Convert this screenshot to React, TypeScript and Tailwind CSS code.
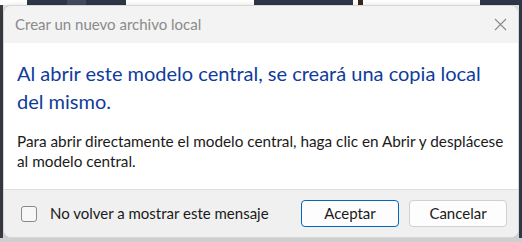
export default function App() {
  const font = { fontFamily: 'Lato, "Noto Sans", sans-serif' };

  return (
    <div className="w-[522px] h-[242px] flex flex-col bg-[#e6e6e6] overflow-hidden" style={font}>
      {/* background strip behind the dialog */}
      <div className="h-[5px] flex shrink-0">
        <div className="w-[27px] bg-white" />
        <div className="w-[40px] bg-[#2e3748]" />
        <div className="w-[19px] bg-[#414b5c]" />
        <div className="w-[40px] bg-[#2e3748]" />
        <div className="w-[128px] bg-white" />
        <div className="w-[99px] bg-[#2e3748]" />
        <div className="w-[5px] bg-white" />
        <div className="w-[5px] bg-[#3b2a1a]" />
        <div className="w-[117px] bg-white" />
        <div className="flex-1 bg-[#2e3748]" />
      </div>

      <div className="flex flex-1 min-h-0">
        <div className="w-[3px] bg-[#3a3d42]" />

        <div className="w-[516px] flex flex-col rounded-lg overflow-hidden border border-[#d6d6d6] shadow-[0_2px_6px_rgba(0,0,0,0.25)]">
          {/* title bar */}
          <div className="h-[37px] shrink-0 flex items-center justify-between bg-[#f3f3f3] pl-[11px] pr-[11px]">
            <span className="text-[15px] text-[#8a8a8a] whitespace-nowrap">Crear un nuevo archivo local</span>
            <svg width="13" height="13" viewBox="0 0 13 13" className="text-[#8a8a8a]">
              <path d="M1 1 L12 12 M12 1 L1 12" stroke="currentColor" strokeWidth="1.1" fill="none" />
            </svg>
          </div>

          {/* content */}
          <div className="flex-1 bg-white pl-[13px] pr-[10px] pt-[16px]">
            <p className="text-[20px] leading-[28px] text-[#0f3c9b] whitespace-nowrap">
              Al abrir este modelo central, se creará una copia local
              <br />
              del mismo.
            </p>
            <p className="mt-[16px] text-[15.3px] leading-[20px] text-[#1a1a1a] whitespace-nowrap">
              Para abrir directamente el modelo central, haga clic en Abrir y desplácese
              <br />
              al modelo central.
            </p>
          </div>

          {/* footer */}
          <div className="h-[48px] shrink-0 flex items-center bg-[#f0f0f0] border-t border-[#dedede] pl-[17px] pr-[11px]">
            <div className="w-[16px] h-[16px] rounded-[3px] border border-[#8a8a8a] bg-[#f7f7f7]" />
            <span className="ml-[13px] text-[15px] text-[#1a1a1a] whitespace-nowrap">No volver a mostrar este mensaje</span>
            <div className="ml-auto flex gap-[10px]">
              <button className="w-[98px] h-[27px] rounded-[4px] border border-[#0067c0] bg-[#fdfdfd] text-[15px] text-[#1a1a1a]">
                Aceptar
              </button>
              <button className="w-[98px] h-[27px] rounded-[4px] border border-[#d0d0d0] bg-[#fdfdfd] text-[15px] text-[#1a1a1a]">
                Cancelar
              </button>
            </div>
          </div>
        </div>

        <div className="flex-1 bg-[#2e3748]" />
      </div>

      <div className="h-[4px] shrink-0 bg-[#cfcfcf]" />
    </div>
  );
}
